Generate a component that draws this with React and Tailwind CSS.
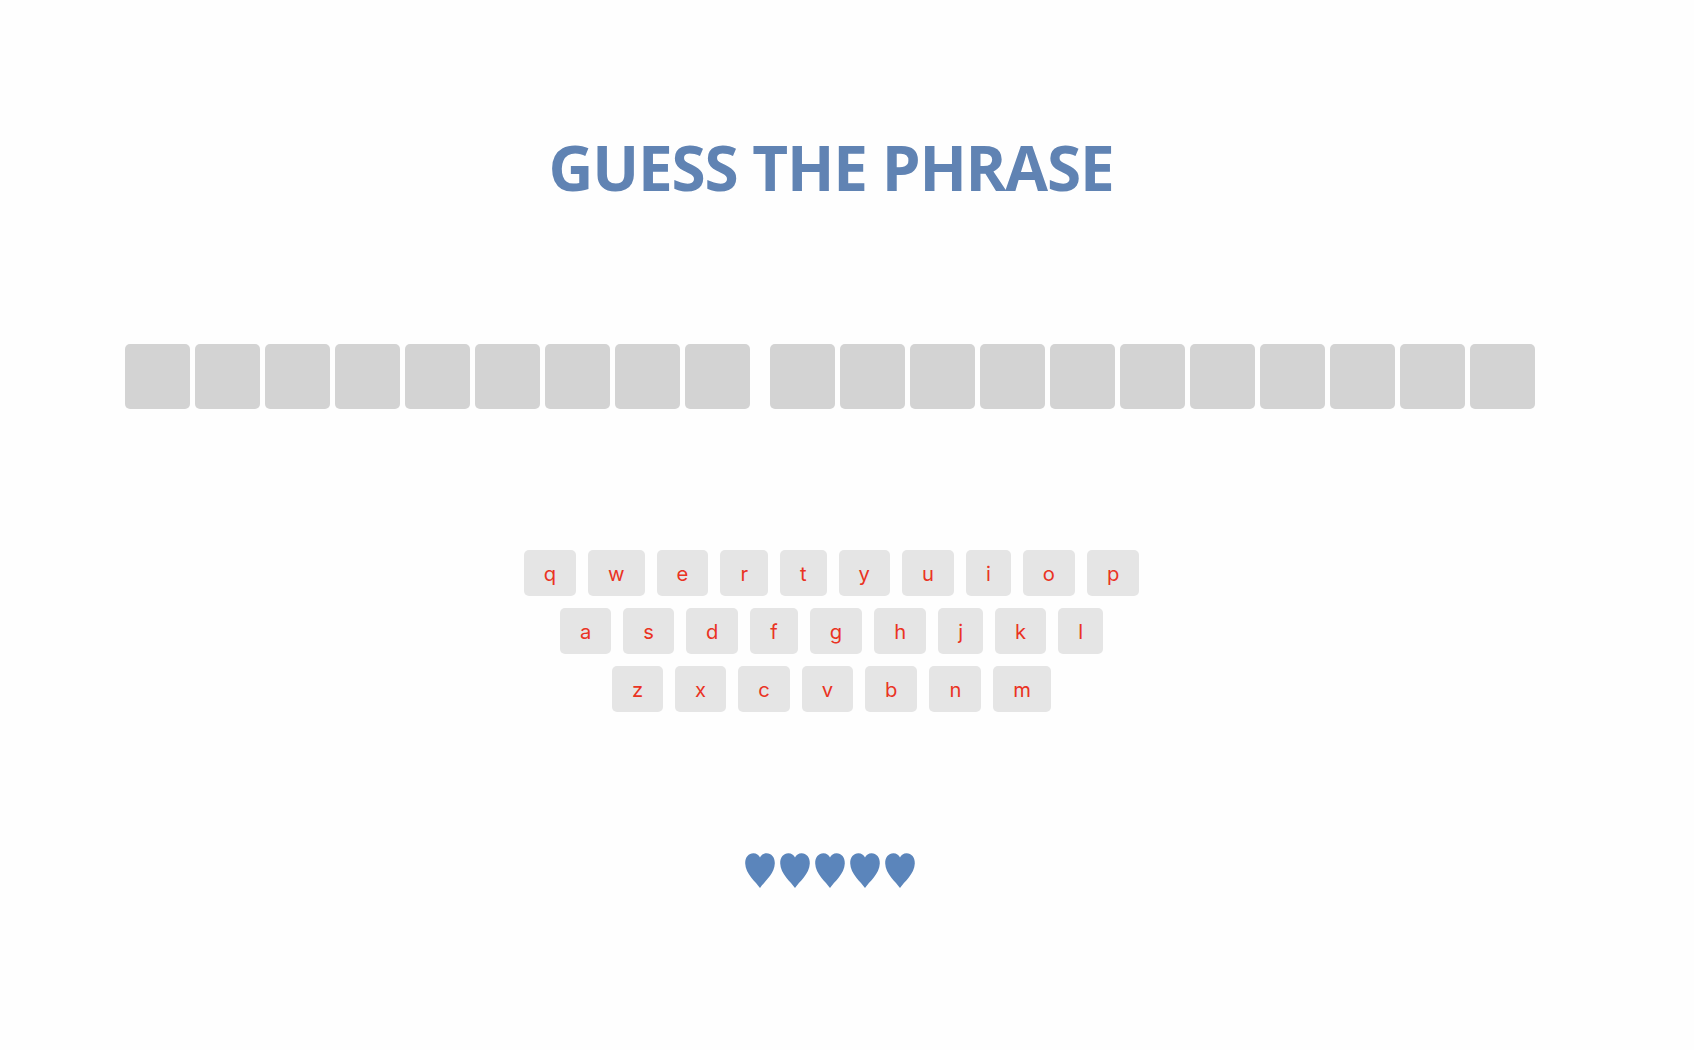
const words = [9, 11];
const rows = ['qwertyuiop', 'asdfghjkl', 'zxcvbnm'];
const lives = [1, 2, 3, 4, 5];

const Heart = () => (
  <svg viewBox="0 0 30 35" className="w-[30px] h-[35px] fill-[#5b85bb]">
    <path d="M15 35 C11 29 0.5 21 0.2 10.5 C0 4.5 3.6 0.3 8.4 0.3 C11.4 0.3 13.8 1.9 15 4.6 C16.2 1.9 18.6 0.3 21.6 0.3 C26.4 0.3 30 4.5 29.8 10.5 C29.5 21 19 29 15 35 Z" />
  </svg>
);

const App = () => {
  return (
    <div className="min-h-[1050px] bg-[#fefefe] pr-[34px] flex flex-col items-center">
      <h1 className="mt-[128px] ml-[2px] text-[62px] leading-[78px] font-bold tracking-[-1.2px] text-[#6083b3] font-['Open_Sans',sans-serif]">
        GUESS THE PHRASE
      </h1>

      <div className="mt-[138px] flex gap-5">
        {words.map((count, w) => (
          <div key={w} className="flex gap-[5px]">
            {Array.from({ length: count }).map((_, i) => (
              <div key={i} className="w-[65px] h-[65px] rounded-[5px] bg-[#d3d3d3]" />
            ))}
          </div>
        ))}
      </div>

      <div className="mt-[141px] ml-[3px] flex flex-col gap-3">
        {rows.map((row) => (
          <div key={row} className="flex justify-center gap-3">
            {row.split('').map((letter) => (
              <button key={letter} className="h-[46px] px-5 pt-[2px] rounded-[5px] bg-[#e5e5e5] text-[20.2px] text-[#ea3323] font-['Inter',sans-serif]">
                {letter}
              </button>
            ))}
          </div>
        ))}
      </div>

      <div className="mt-[141px] flex gap-[5px]">
        {lives.map((n) => <Heart key={n} />)}
      </div>
    </div>
  );
};

export default App;
